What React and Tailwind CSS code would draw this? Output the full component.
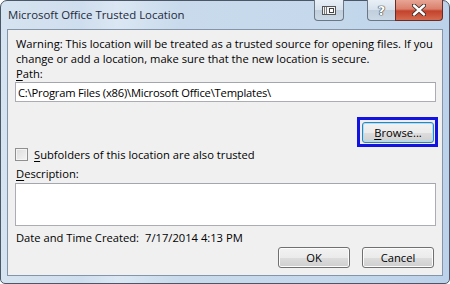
export default function App() {
  return (
    <div className="w-[450px] h-[284px] font-['Open_Sans',sans-serif] text-[11.2px] text-black">
      <div className="flex h-full w-full flex-col rounded-t-[7px] rounded-b-[5px] border border-[#4b5766] bg-[linear-gradient(90deg,#d6e3f0_0%,#cfdeee_18%,#dbe7f3_26%,#c8daec_40%,#c6d9ec_70%,#bcd2ea_100%)]">
        {/* title bar */}
        <div className="flex h-[28px] shrink-0 items-start justify-between pl-[7px] pr-[6px]">
          <div className="pt-[6px] text-[11.4px] leading-[15px] text-[#1e2a3a]">Microsoft Office Trusted Location</div>
          <div className="-mt-px flex items-start">
            <div className="mr-[23px] flex h-[21px] w-[30px] items-center justify-center rounded-b-[4px] border border-t-0 border-[#6b7785] bg-[linear-gradient(180deg,#e9eff6_0%,#d6e1ec_50%,#c1cfdd_51%,#cbd8e6_100%)]">
              <svg width="14" height="9" viewBox="0 0 14 9">
                <rect x="0.5" y="0.5" width="13" height="8" fill="#f4f4f4" stroke="#555" />
                <line x1="2.5" y1="1" x2="2.5" y2="8" stroke="#777" />
                <line x1="4.5" y1="1" x2="4.5" y2="8" stroke="#777" />
                <rect x="7.5" y="2.5" width="4" height="4" fill="#fff" stroke="#444" />
              </svg>
            </div>
            <div className="flex h-[21px] w-[28px] items-center justify-center rounded-bl-[4px] border border-t-0 border-r-0 border-[#6b7785] bg-[linear-gradient(180deg,#e9eff6_0%,#d6e1ec_50%,#c1cfdd_51%,#cbd8e6_100%)] font-['DejaVu_Sans',sans-serif] text-[13px] font-bold leading-none text-white [text-shadow:0_0_1px_#333,0_0_1px_#333,0_0_1px_#333]">
              ?
            </div>
            <div className="flex h-[21px] w-[48px] items-center justify-center rounded-br-[4px] border border-t-0 border-[#6b2a22] bg-[linear-gradient(180deg,#e8a595_0%,#d9806c_45%,#c4422b_55%,#d36a4f_100%)]">
              <svg width="14" height="12" viewBox="0 0 14 12">
                <path d="M2 1.5 L12 10.5 M12 1.5 L2 10.5" stroke="#3a2a28" strokeWidth="4.2" strokeLinecap="round" />
                <path d="M2 1.5 L12 10.5 M12 1.5 L2 10.5" stroke="#fff" strokeWidth="2.4" strokeLinecap="round" />
              </svg>
            </div>
          </div>
        </div>

        {/* client area */}
        <div className="mx-[6px] mb-[7px] flex flex-1 flex-col border border-[#8495aa] bg-[#f0f0f0] pl-[7px] pr-[6px] pt-[6px]">
          <div className="ml-px whitespace-nowrap leading-[15px]">
            Warning: This location will be treated as a trusted source for opening files. If you
            <br />
            change or add a location, make sure that the new location is secure.
          </div>
          <div className="ml-px h-[15px] leading-[15px]">
            <span className="underline underline-offset-2">P</span>ath:
          </div>
          <div className="mt-px flex h-[20px] items-center border border-[#abadb3] border-t-[#a3a6ad] bg-white pl-[2px] leading-[15px] tracking-[-0.2px]">
            C:\Program Files (x86)\Microsoft Office\Templates\
          </div>
          <div className="-mr-[2px] mt-[15px] flex h-[30px] justify-end">
            <div className="border-[3px] border-[#1212e2] pl-[2px] pr-px pt-[2px]">
              <button className="flex h-[21px] w-[72px] items-center justify-center rounded-[3px] border border-[#3c7fb1] bg-[linear-gradient(180deg,#f2f2f2_0%,#ebebeb_50%,#dddddd_51%,#cfcfcf_100%)] leading-[15px] shadow-[inset_0_0_0_1px_#9ee3fb]">
                <span>
                  <span className="underline underline-offset-2">B</span>rowse...
                </span>
              </button>
            </div>
          </div>
          <div className="flex h-[15px] items-center">
            <div className="h-[13px] w-[13px] border border-[#8e8f8f] bg-[linear-gradient(135deg,#dcdcdc_0%,#f4f4f4_100%)] shadow-[inset_0_0_0_1px_#f4f4f4]" />
            <div className="ml-[6px] leading-[15px]">
              <span className="underline underline-offset-2">S</span>ubfolders of this location are also trusted
            </div>
          </div>
          <div className="ml-px mt-[4px] h-[15px] leading-[15px]">
            <span className="underline underline-offset-2">D</span>escription:
          </div>
          <div className="mt-[2px] h-[43px] border border-[#abadb3] border-t-[#a3a6ad] bg-white" />
          <div className="ml-px mt-[4px] flex h-[15px] whitespace-nowrap leading-[15px]">
            <span className="w-[129px] shrink-0">Date and Time Created:</span>
            <span>7/17/2014 4:13 PM</span>
          </div>
          <div className="mt-[2px] flex justify-end gap-[12px] pr-[2px]">
            <button className="flex h-[21px] w-[72px] items-center justify-center rounded-[3px] border border-[#707070] bg-[linear-gradient(180deg,#f2f2f2_0%,#ebebeb_50%,#dddddd_51%,#cfcfcf_100%)] leading-[15px] shadow-[inset_0_0_0_1px_#fcfcfc]">
              OK
            </button>
            <button className="flex h-[21px] w-[72px] items-center justify-center rounded-[3px] border border-[#707070] bg-[linear-gradient(180deg,#f2f2f2_0%,#ebebeb_50%,#dddddd_51%,#cfcfcf_100%)] leading-[15px] shadow-[inset_0_0_0_1px_#fcfcfc]">
              Cancel
            </button>
          </div>
        </div>
      </div>
    </div>
  );
}
